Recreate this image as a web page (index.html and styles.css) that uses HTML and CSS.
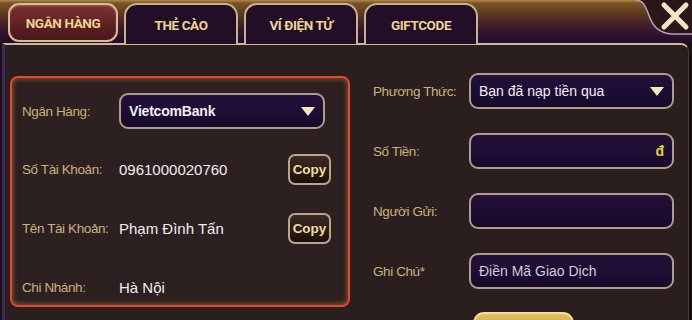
FILE: index.html
```html
<!DOCTYPE html>
<html>
	<head>
		<meta charset="utf-8" />
		<meta name="viewport" content="width=device-width, initial-scale=1" />
		<title>Nạp Tiền</title>
		<link rel="stylesheet" href="styles.css">
	</head>
	<body>
		<div class="frame">
			<div class="topbar">
				<nav class="tabs">
					<div class="tab active">NGÂN HÀNG</div>
					<div class="tab">THẺ CÀO</div>
					<div class="tab">VÍ ĐIỆN TỬ</div>
					<div class="tab">GIFTCODE</div>
				</nav>
				<!-- close button sits in the curved notch at the right -->
				<div class="close-corner">
					<svg width="56" height="44" viewBox="0 0 56 44">
						<path d="M0 0 C8 0 10 8 14 18 C18 28 24 33 36 34 L56 34 L56 0 Z" fill="#2a1618"/>
						<path d="M0 0 C8 0 10 8 14 18 C18 28 24 33 36 34 L56 34" fill="none" stroke="#b7a0b8" stroke-width="1.5"/>
						<path d="M28 5 L50 27 M50 5 L28 27" stroke="#f3e3c2" stroke-width="5" stroke-linecap="round"/>
					</svg>
				</div>
			</div>

			<div class="panel">
				<section class="bank-box">
					<div class="row">
						<span class="label">Ngân Hàng:</span>
						<div class="field select bank-select">VietcomBank<span class="caret"></span></div>
					</div>
					<div class="row">
						<span class="label">Số Tài Khoản:</span>
						<span class="value">0961000020760</span>
						<button type="button" class="copy">Copy</button>
					</div>
					<div class="row">
						<span class="label">Tên Tài Khoản:</span>
						<span class="value">Phạm Đình Tấn</span>
						<button type="button" class="copy">Copy</button>
					</div>
					<div class="row">
						<span class="label">Chi Nhánh:</span>
						<span class="value">Hà Nội</span>
					</div>
				</section>

				<form class="deposit">
					<div class="row">
						<span class="label">Phương Thức:</span>
						<div class="field select">Bạn đã nạp tiền qua<span class="caret"></span></div>
					</div>
					<div class="row">
						<span class="label">Số Tiền:</span>
						<div class="field money"><span class="currency">đ</span></div>
					</div>
					<div class="row">
						<span class="label">Người Gửi:</span>
						<div class="field"></div>
					</div>
					<div class="row">
						<span class="label">Ghi Chú*</span>
						<div class="field placeholder">Điền Mã Giao Dịch</div>
					</div>
					<button type="button" class="submit"></button>
				</form>
			</div>
		</div>
	</body>
</html>
```

FILE: styles.css
```css
body {
    margin: 0;
    background-color: #1a1010;
    font-family: "Liberation Sans", Arial, sans-serif;
}

.frame {
    width: 692px;
    height: 320px;
    overflow: hidden;
    background-color: #1a1010;
}

.topbar {
    position: relative;
    height: 43px;
    background: linear-gradient(#b08a48 0px, #7a5426 3px, #5c3820 14px, #3a1a2c 28px, #250e2c 40px);
}

.tabs {
    display: flex;
    align-items: flex-end;
    gap: 6px;
    height: 43px;
    padding-left: 8px;
}

.tab {
    width: 114px;
    height: 41px;
    box-sizing: border-box;
    display: flex;
    align-items: center;
    justify-content: center;
    border: 2px solid #c9b08e;
    border-bottom: none;
    border-radius: 13px 13px 0 0;
    background-color: #230e28;
    color: #ecd396;
    font-family: "Roboto", "Liberation Sans", sans-serif;
    font-weight: bold;
    font-size: 13.5px;
    letter-spacing: -0.4px;
    margin-bottom: -1px;
}

.tab.active {
    width: 110px;
    height: 39px;
    margin-bottom: 1px;
    border: 2px solid #d7bd95;
    border-radius: 11px;
    background: linear-gradient(#7e3332, #5a1f22 60%, #4a181c);
    color: #efd290;
    box-shadow: inset 0 1px 2px rgba(255, 210, 160, 0.3);
}

.close-corner {
    position: absolute;
    top: 0;
    right: 0;
    width: 56px;
    height: 44px;
}

.panel {
    display: flex;
    align-items: flex-start;
    gap: 23px;
    height: 277px;
    box-sizing: border-box;
    margin: 0 3px 0 2px;
    padding: 28px 0 0 5px;
    border-top: 2px solid #cdb89c;
    border-left: 3px solid #3e2660;
    border-right: 1px solid #4a3a3a;
    border-top-right-radius: 8px;
    background-color: #2a1e1f;
}

/* left box with bank info */
.bank-box {
    width: 340px;
    height: 231px;
    box-sizing: border-box;
    margin-top: 3px;
    padding: 15px 0 0 10px;
    border: 2px solid #e8442e;
    border-radius: 8px;
    background-color: #2c2021;
    box-shadow: inset 0 0 5px 1px rgba(214, 160, 60, 0.45);
    display: flex;
    flex-direction: column;
    gap: 23px;
}

.row {
    display: flex;
    align-items: center;
    height: 36px;
}

.label {
    width: 97px;
    flex-shrink: 0;
    color: #cbb27a;
    font-size: 13.5px;
    letter-spacing: -0.4px;
}

.value {
    flex: 1;
    color: #f2eeee;
    font-size: 15px;
}

.field {
    position: relative;
    width: 205px;
    height: 36px;
    box-sizing: border-box;
    display: flex;
    align-items: center;
    padding: 0 8px;
    border: 2px solid #b19d87;
    border-radius: 9px;
    background: linear-gradient(#23103a, #160a2c);
    color: #f3eef2;
    font-size: 14px;
}

.bank-select {
    width: 206px;
    font-weight: bold;
    letter-spacing: -0.2px;
}

.caret {
    position: absolute;
    right: 8px;
    top: 12px;
    width: 0;
    height: 0;
    border-left: 7px solid transparent;
    border-right: 7px solid transparent;
    border-top: 9px solid #f6e7c4;
}

.money {
    justify-content: flex-end;
}

.currency {
    color: #e6d23a;
    font-weight: bold;
    font-size: 14px;
}

.placeholder {
    color: #d4cbd8;
}

.copy {
    width: 43px;
    height: 31px;
    margin-right: 17px;
    padding: 0;
    border: 2px solid #b7a58c;
    border-radius: 7px;
    background: linear-gradient(#3c2a22, #1c100c);
    color: #f1dca6;
    font-family: "Liberation Sans", Arial, sans-serif;
    font-weight: bold;
    font-size: 13.5px;
}

/* right form */
.deposit {
    display: flex;
    flex-direction: column;
    gap: 24px;
}

.deposit .label {
    width: 96px;
}

.submit {
    width: 101px;
    height: 30px;
    margin: -1px 0 0 100px;
    border: 2px solid #f1dc98;
    border-radius: 11px;
    background: linear-gradient(#e4bf62, #b88a30);
}
```
